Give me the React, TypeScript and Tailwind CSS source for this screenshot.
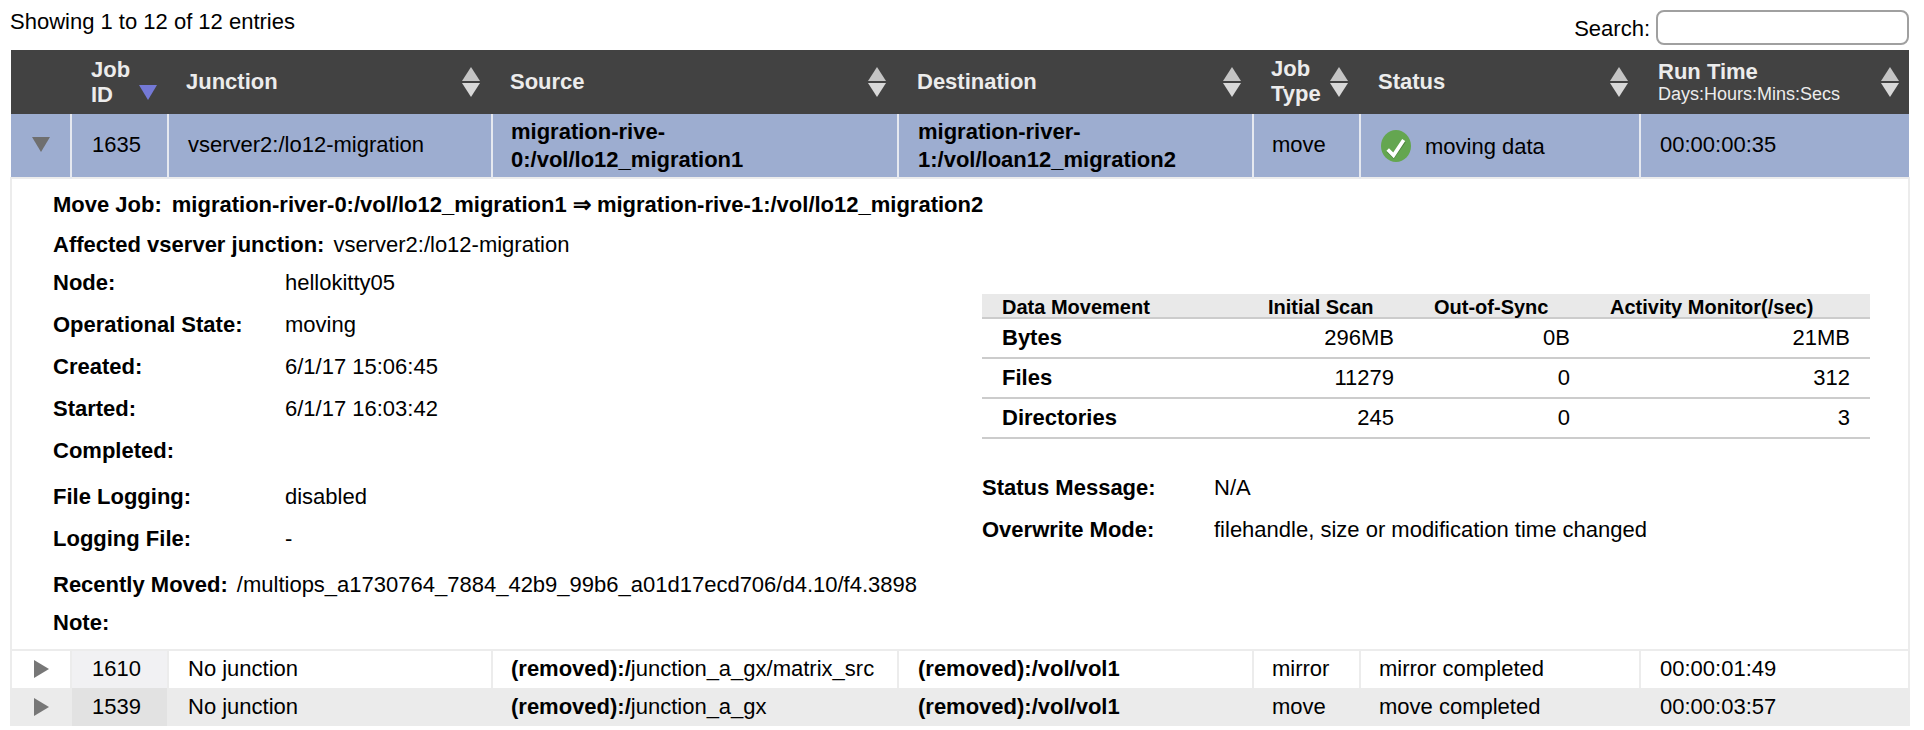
import React from 'react';

function SortIcon({ active }: { active?: boolean }) {
  if (active) {
    return (
      <svg width="18" height="15" viewBox="0 0 18 15" className="shrink-0">
        <path d="M0 0h18L9 15z" fill="#7479d6" />
      </svg>
    );
  }
  return (
    <svg width="18" height="30" viewBox="0 0 18 30" className="shrink-0">
      <path d="M9 0l9 14H0z" fill="#c4c4c4" />
      <path d="M0 16h18L9 30z" fill="#d8d8d8" />
    </svg>
  );
}

function CheckIcon() {
  return (
    <svg width="30" height="32" viewBox="0 0 30 32" className="shrink-0">
      <ellipse cx="15" cy="16" rx="15" ry="16" fill="#64a650" />
      <path d="M7 20.5l5.5 5.5L23 11" fill="none" stroke="#4d7f3e" strokeWidth="4" />
      <path d="M6.7 19.5l5.8 5.8L22.7 10" fill="none" stroke="#fff" strokeWidth="3.6" />
    </svg>
  );
}

function Expander({ open }: { open?: boolean }) {
  return open ? (
    <svg width="18" height="15" viewBox="0 0 18 15" className="mx-auto -mt-[1px]">
      <path d="M0 0h18L9 15z" fill="#6f6f6f" />
    </svg>
  ) : (
    <svg width="15" height="18" viewBox="0 0 15 18" className="mx-auto">
      <path d="M0 0l15 9L0 18z" fill="#777" />
    </svg>
  );
}

function HeadCell({ children, className, pr = 'pr-[12px]' }: { children: React.ReactNode; className?: string; pr?: string }) {
  return (
    <th className={`p-0 text-left align-middle font-bold text-[#ececec] ${className ?? ''}`}>
      <div className={`flex items-center justify-between leading-[25px] ${pr}`}>
        <div className="-mt-[2px]">{children}</div>
        <SortIcon />
      </div>
    </th>
  );
}

function InfoRow({ label, value, className }: { label: string; value?: string; className: string }) {
  return (
    <div className={`flex ${className}`}>
      <span className="w-[232px] font-bold">{label}</span>
      <span>{value}</span>
    </div>
  );
}

const statRows = [
  ['Bytes', '296MB', '0B', '21MB'],
  ['Files', '11279', '0', '312'],
  ['Directories', '245', '0', '3'],
];

function DataMovement() {
  return (
    <table className="w-[888px] table-fixed border-collapse">
      <thead>
        <tr className="h-[24px] border-b-[2px] border-[#cccccc] bg-[#e9e9e9] text-[20px] font-bold leading-[20px] [&>th]:pt-[2px]">
          <th className="w-[286px] pl-5 text-left">Data Movement</th>
          <th className="w-[126px] pr-0 text-left whitespace-nowrap">Initial Scan</th>
          <th className="w-[176px] pl-[40px] text-left">Out-of-Sync</th>
          <th className="pl-[40px] text-left whitespace-nowrap">Activity Monitor(/sec)</th>
        </tr>
      </thead>
      <tbody>
        {statRows.map((r) => (
          <tr key={r[0]} className="h-[40px] border-b-[2px] border-[#cccccc]">
            <td className="pl-5 font-bold">{r[0]}</td>
            <td className="text-right">{r[1]}</td>
            <td className="text-right">{r[2]}</td>
            <td className="pr-5 text-right">{r[3]}</td>
          </tr>
        ))}
      </tbody>
    </table>
  );
}

export default function App() {
  return (
    <div className="relative h-[730px] overflow-hidden bg-white font-['Liberation_Sans',Arial,sans-serif] text-[22px] leading-[22px] text-black">
      <div className="flex h-[50px] items-start justify-between px-[10px]">
        <div className="mt-[11px]">Showing 1 to 12 of 12 entries</div>
        <div className="mr-[5px] mt-[10px] flex items-start">
          <label className="mt-[8px] mr-[6px]">Search:</label>
          <input className="h-[35px] w-[253px] rounded-[8px] border-[2px] border-[#a0a0a0] bg-white" />
        </div>
      </div>

      <div className="mx-[10px] w-[1900px]">
        <table className="w-full table-fixed border-collapse">
          <colgroup>
            <col className="w-[60px]" />
            <col className="w-[97px]" />
            <col className="w-[324px]" />
            <col className="w-[406px]" />
            <col className="w-[355px]" />
            <col className="w-[107px]" />
            <col className="w-[280px]" />
            <col />
          </colgroup>
          <thead>
            <tr className="h-[64px] bg-[#424242]">
              <th className="p-0" />
              <th className="p-0 pl-[20px] text-left align-middle font-bold leading-[25px] text-[#ececec]">
                <div className="-mt-[1px] flex items-end">
                  <span>Job<br />ID</span>
                  <span className="mb-[7px] ml-[9px]"><SortIcon active /></span>
                </div>
              </th>
              <HeadCell className="pl-[18px]">Junction</HeadCell>
              <HeadCell className="pl-[18px]">Source</HeadCell>
              <HeadCell className="pl-[19px]">Destination</HeadCell>
              <HeadCell className="pl-[18px]"><span className="block">Job</span><span className="block">Type</span></HeadCell>
              <HeadCell className="pl-[18px]">Status</HeadCell>
              <HeadCell className="pl-[18px]" pr="pr-[10px]">
                Run Time
                <span className="block text-[18px] leading-[20px] font-normal">Days:Hours:Mins:Secs</span>
              </HeadCell>
            </tr>
          </thead>
          <tbody>
            <tr className="h-[64px] bg-[#9dadd0] [&>td]:border-x-[2px] [&>td]:border-[#e6e9f0] [&>td]:pb-[2px]">
              <td className="!border-l-0 p-0"><Expander open /></td>
              <td className="p-0 pl-[20px]">1635</td>
              <td className="p-0 pl-[19px]">vserver2:/lo12-migration</td>
              <td className="!pb-0 p-0 pl-[18px] font-bold leading-[28px]">migration-rive-<br />0:/vol/lo12_migration1</td>
              <td className="!pb-0 p-0 pl-[19px] font-bold leading-[28px]">migration-river-<br />1:/vol/loan12_migration2</td>
              <td className="p-0 pl-[18px]">move</td>
              <td className="!pb-0 p-0 pl-[20px]">
                <div className="flex items-center gap-[14px]"><CheckIcon /><span className="mt-[3px]">moving data</span></div>
              </td>
              <td className="!border-r-0 p-0 pl-[19px]">00:00:00:35</td>
            </tr>
            <tr>
              <td colSpan={8} className="h-[472px] border-x-[2px] border-y-[2px] border-[#ececec] p-0 align-top">
                <div className="flex pl-[41px]">
                  <div className="w-[929px]">
                    <div className="mt-[15px] flex gap-[10px] font-bold whitespace-nowrap">
                      <span>Move Job:</span>
                      <span>migration-river-0:/vol/lo12_migration1 ⇒ migration-rive-1:/vol/lo12_migration2</span>
                    </div>
                    <div className="mt-[18px] flex gap-[9px]">
                      <span className="font-bold">Affected vserver junction:</span>
                      <span>vserver2:/lo12-migration</span>
                    </div>
                    <InfoRow className="mt-[16px]" label="Node:" value="hellokitty05" />
                    <InfoRow className="mt-[20px]" label="Operational State:" value="moving" />
                    <InfoRow className="mt-[20px]" label="Created:" value="6/1/17 15:06:45" />
                    <InfoRow className="mt-[20px]" label="Started:" value="6/1/17 16:03:42" />
                    <InfoRow className="mt-[20px]" label="Completed:" />
                    <InfoRow className="mt-[24px]" label="File Logging:" value="disabled" />
                    <InfoRow className="mt-[20px]" label="Logging File:" value="-" />
                    <div className="mt-[24px] flex gap-[9px] whitespace-nowrap">
                      <span className="font-bold">Recently Moved:</span>
                      <span>/multiops_a1730764_7884_42b9_99b6_a01d17ecd706/d4.10/f4.3898</span>
                    </div>
                    <div className="mt-[16px] font-bold">Note:</div>
                  </div>
                  <div className="pt-[115px]">
                    <DataMovement />
                    <div className="mt-[38px] flex">
                      <span className="w-[232px] font-bold">Status Message:</span>
                      <span>N/A</span>
                    </div>
                    <div className="mt-[20px] flex">
                      <span className="w-[232px] font-bold">Overwrite Mode:</span>
                      <span>filehandle, size or modification time changed</span>
                    </div>
                  </div>
                </div>
              </td>
            </tr>
            <tr className="h-[38px] [&>td]:border-x-[2px] [&>td]:border-[#ececec] [&>td]:pb-[1px]">
              <td className="p-0"><Expander /></td>
              <td className="bg-[#f1f1f3] p-0 pl-[20px]">1610</td>
              <td className="p-0 pl-[19px]">No junction</td>
              <td className="p-0 pl-[18px] whitespace-nowrap"><b>(removed):/</b>junction_a_gx/matrix_src</td>
              <td className="p-0 pl-[19px] font-bold">(removed):/vol/vol1</td>
              <td className="p-0 pl-[18px]">mirror</td>
              <td className="p-0 pl-[18px]">mirror completed</td>
              <td className="p-0 pl-[19px]">00:00:01:49</td>
            </tr>
            <tr className="h-[38px] bg-[#ebebeb] [&>td]:border-x-[2px] [&>td]:border-[#ebebeb]">
              <td className="p-0"><Expander /></td>
              <td className="bg-[#e2e2e2] p-0 pl-[20px]">1539</td>
              <td className="p-0 pl-[19px]">No junction</td>
              <td className="p-0 pl-[18px]"><b>(removed):/</b>junction_a_gx</td>
              <td className="p-0 pl-[19px] font-bold">(removed):/vol/vol1</td>
              <td className="p-0 pl-[18px]">move</td>
              <td className="p-0 pl-[18px]">move completed</td>
              <td className="p-0 pl-[19px]">00:00:03:57</td>
            </tr>
          </tbody>
        </table>
      </div>
    </div>
  );
}
